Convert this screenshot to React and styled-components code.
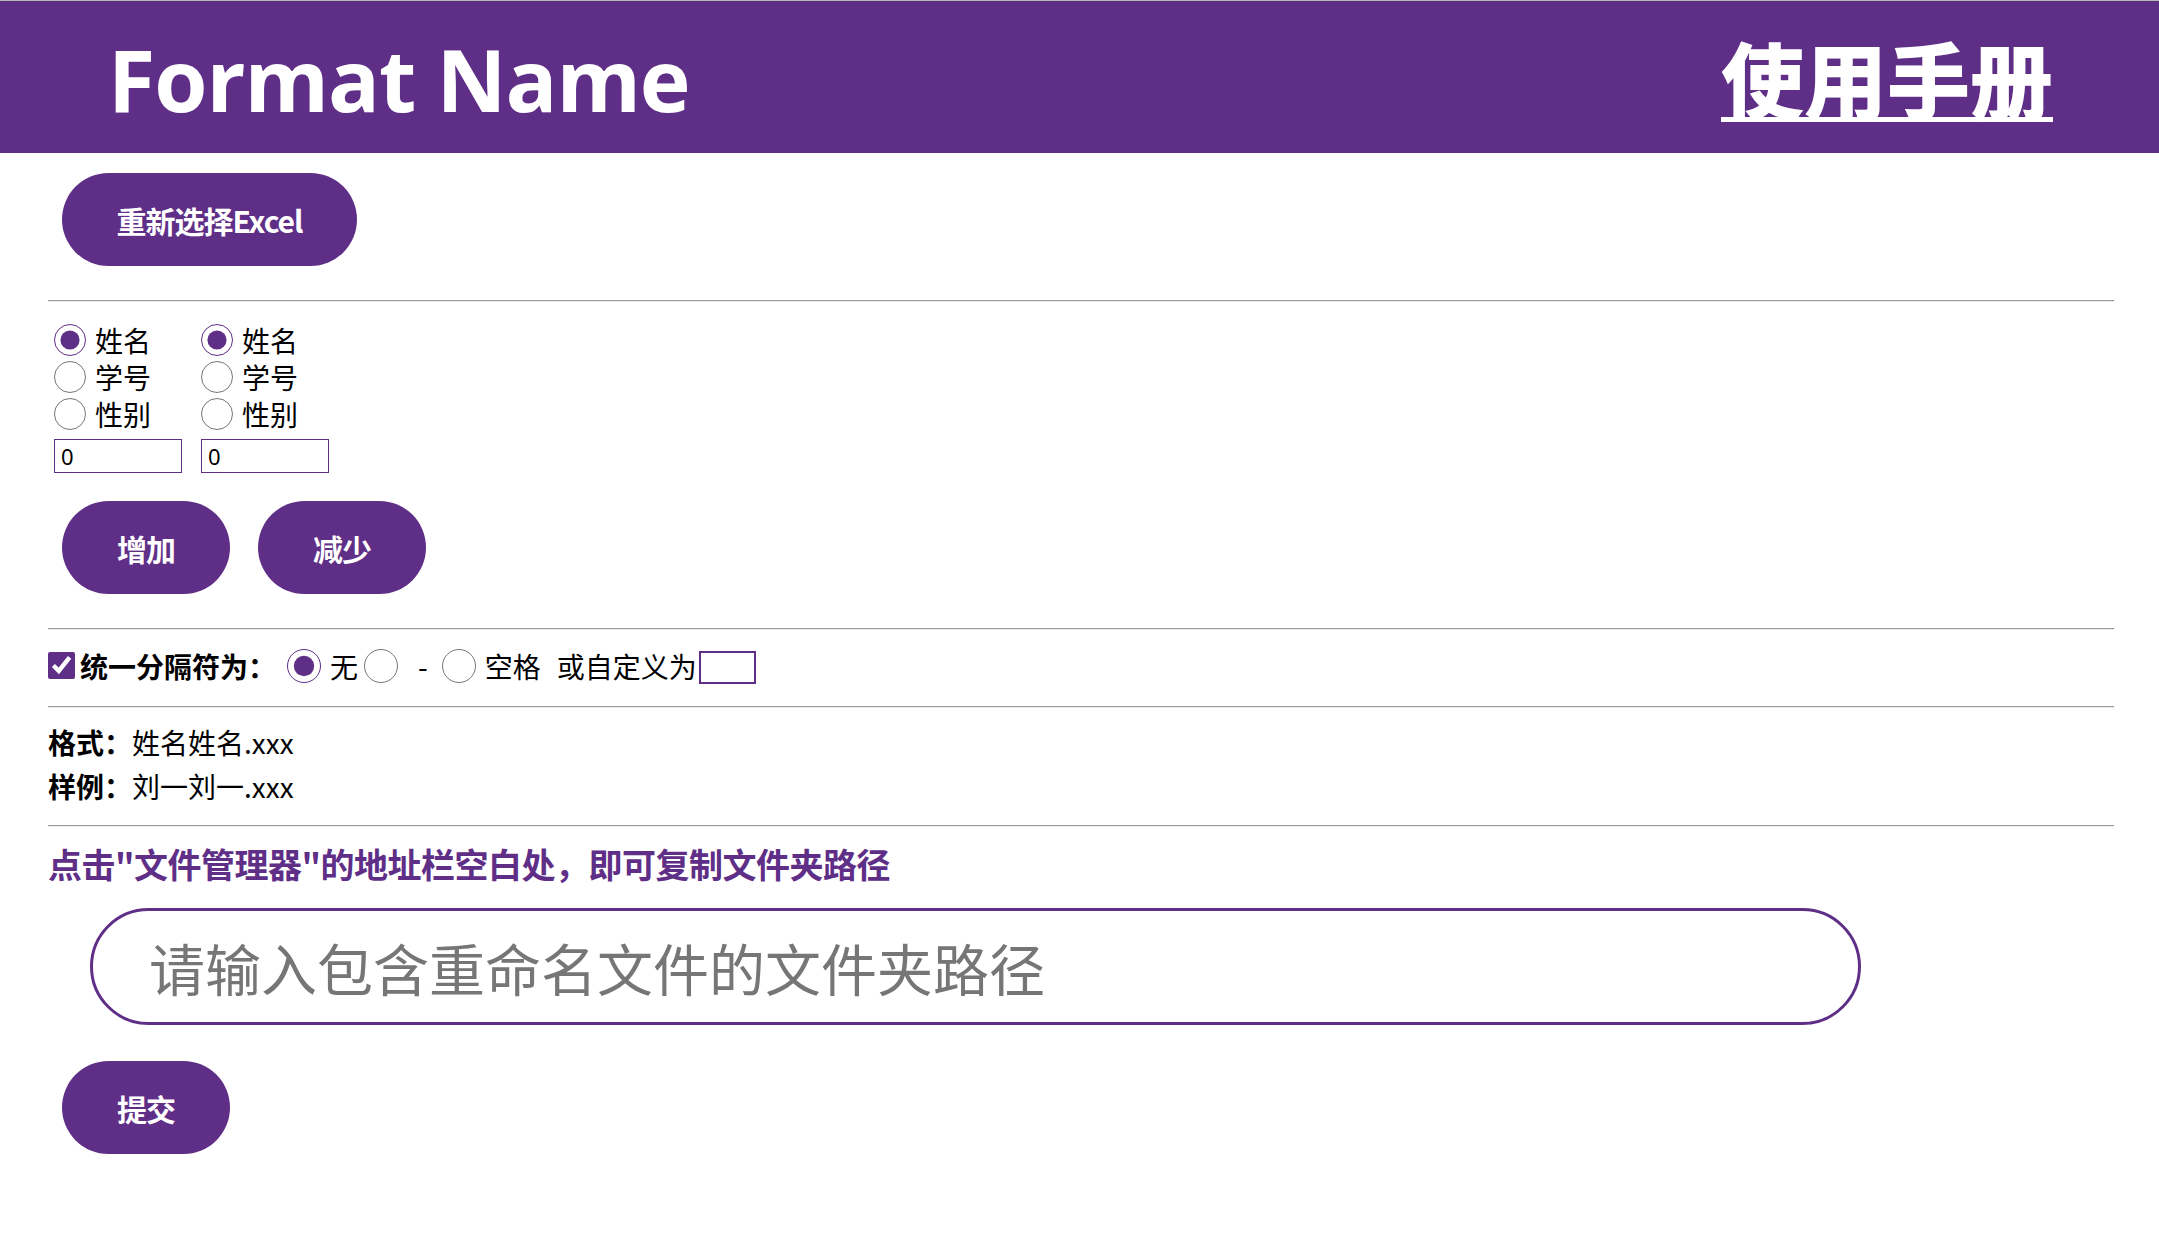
import React, { useState } from "react";
import styled, { createGlobalStyle } from "styled-components";

const purple = "#5f2f88";

const GlobalStyle = createGlobalStyle`
  body {
    margin: 0;
    background: #fff;
    font-family: "Noto Sans", "Noto Sans CJK SC", sans-serif;
    color: #000;
  }
`;

const Header = styled.header`
  height: 152px;
  border-top: 1px solid #b8b8b8;
  background: ${purple};
  display: flex;
  align-items: center;
  justify-content: space-between;
  padding: 0 106px 0 108px;
`;

const Logo = styled.h1`
  margin: 0;
  color: #fff;
  font-family: "Open Sans", "Noto Sans CJK SC", sans-serif;
  font-weight: 700;
  font-size: 86px;
  letter-spacing: -1px;
  line-height: 1;
  margin-top: 4px;
`;

const Manual = styled.a`
  color: #fff;
  font-family: "Noto Sans CJK SC", sans-serif;
  font-weight: 900;
  font-size: 83px;
  line-height: 1;
  text-decoration: underline;
  text-decoration-thickness: 5px;
  text-underline-offset: 4px;
  cursor: pointer;
`;

const Main = styled.main`
  padding: 0 45px 0 48px;
`;

const PillButton = styled.button`
  display: block;
  width: ${(p) => p.$width || 168}px;
  height: 93px;
  margin: ${(p) => p.$margin || "0"};
  border: none;
  border-radius: 47px;
  background: ${purple};
  color: #fff;
  font-family: "Noto Sans CJK SC", sans-serif;
  font-weight: 700;
  font-size: 30px;
  letter-spacing: -1px;
  cursor: pointer;
`;

const Rule = styled.hr`
  margin: ${(p) => p.$margin || "0"};
  border: none;
  border-top: 1px solid #9a9a9a;
  border-bottom: 1px solid #ececec;
  height: 0;
`;

const Columns = styled.div`
  display: flex;
  gap: 13px;
  margin-top: 19px;
`;

const Column = styled.div`
  display: flex;
  flex-direction: column;
  width: 134px;
`;

const RadioLabel = styled.label`
  display: flex;
  align-items: center;
  height: 37px;
  font-family: "Noto Sans CJK SC", sans-serif;
  font-size: 28px;
  gap: ${(p) => p.$gap ?? 9}px;
  white-space: nowrap;
`;

const Radio = styled.input.attrs({ type: "radio" })`
  width: ${(p) => p.$size || 32}px;
  height: ${(p) => p.$size || 32}px;
  margin: 0 0 0 ${(p) => p.$ml ?? 6}px;
  accent-color: ${purple};
  flex-shrink: 0;
`;

const NumberBox = styled.input`
  box-sizing: border-box;
  width: 128px;
  height: 34px;
  margin: 7px 0 0 6px;
  border: 1px solid ${purple};
  padding: 0 6px;
  font-family: "Noto Sans", sans-serif;
  font-size: 22px;
  outline: none;
`;

const ButtonRow = styled.div`
  display: flex;
  gap: 28px;
  margin: 28px 0 0 14px;
`;

const SeparatorRow = styled.div`
  display: flex;
  align-items: center;
  box-sizing: border-box;
  height: 76px;
  padding-bottom: 5px;
  font-family: "Noto Sans CJK SC", sans-serif;
  font-size: 28px;
`;

const Check = styled.input.attrs({ type: "checkbox" })`
  width: 27px;
  height: 27px;
  margin: 0 5px 0 0;
  accent-color: ${purple};
`;

const Bold = styled.span`
  font-weight: 700;
  margin-right: 5px;
`;

const Plain = styled.span`
  margin: ${(p) => p.$margin || "0"};
`;

const CustomBox = styled.input`
  box-sizing: border-box;
  width: 57px;
  height: 33px;
  margin: 4px 0 0 2px;
  border: 2px solid ${purple};
  outline: none;
`;

const InfoBlock = styled.div`
  padding: 12px 0 17px;
`;

const InfoLine = styled.div`
  height: 44px;
  display: flex;
  align-items: center;
  font-family: "Noto Sans CJK SC", sans-serif;
  font-size: 28px;
  strong {
    font-weight: 700;
  }
`;

const Hint = styled.p`
  margin: 20px 0 0;
  color: ${purple};
  font-family: "Noto Sans CJK SC", sans-serif;
  font-weight: 700;
  font-size: 34px;
  letter-spacing: -0.5px;
  line-height: 34px;
`;

const PathInput = styled.input`
  display: block;
  box-sizing: border-box;
  width: 1771px;
  height: 117px;
  margin: 27px 0 0 42px;
  padding: 0 56px;
  border: 3px solid ${purple};
  border-radius: 59px;
  font-family: "Noto Sans CJK SC", sans-serif;
  font-size: 56px;
  outline: none;
  &::placeholder {
    color: #767676;
  }
`;

const fields = ["姓名", "学号", "性别"];

function FieldColumn({ name }) {
  const [value, setValue] = useState("姓名");
  return (
    <Column>
      {fields.map((f) => (
        <RadioLabel key={f}>
          <Radio
            name={name}
            checked={value === f}
            onChange={() => setValue(f)}
          />
          {f}
        </RadioLabel>
      ))}
      <NumberBox defaultValue="0" />
    </Column>
  );
}

export default function App() {
  const [sep, setSep] = useState("none");
  return (
    <>
      <GlobalStyle />
      <Header>
        <Logo>Format Name</Logo>
        <Manual>使用手册</Manual>
      </Header>
      <Main>
        <PillButton $width={295} $margin="20px 0 0 14px">
          重新选择Excel
        </PillButton>
        <Rule $margin="34px 0 0" />
        <Columns>
          <FieldColumn name="f1" />
          <FieldColumn name="f2" />
        </Columns>
        <ButtonRow>
          <PillButton>增加</PillButton>
          <PillButton>减少</PillButton>
        </ButtonRow>
        <Rule $margin="34px 0 0" />
        <SeparatorRow>
          <Check defaultChecked />
          <Bold>统一分隔符为：</Bold>
          <RadioLabel>
            <Radio
              $size={34}
              name="sep"
              checked={sep === "none"}
              onChange={() => setSep("none")}
            />
            无
          </RadioLabel>
          <RadioLabel $gap={20}>
            <Radio
              $size={34}
              name="sep"
              checked={sep === "dash"}
              onChange={() => setSep("dash")}
            />
            -
          </RadioLabel>
          <RadioLabel>
            <Radio
              $size={34}
              $ml={14}
              name="sep"
              checked={sep === "space"}
              onChange={() => setSep("space")}
            />
            空格
          </RadioLabel>
          <Plain $margin="0 0 0 16px">或自定义为</Plain>
          <CustomBox />
        </SeparatorRow>
        <Rule />
        <InfoBlock>
          <InfoLine>
            <strong>格式：</strong>姓名姓名.xxx
          </InfoLine>
          <InfoLine>
            <strong>样例：</strong>刘一刘一.xxx
          </InfoLine>
        </InfoBlock>
        <Rule />
        <Hint>点击"文件管理器"的地址栏空白处，即可复制文件夹路径</Hint>
        <PathInput placeholder="请输入包含重命名文件的文件夹路径" />
        <PillButton $margin="36px 0 0 14px">提交</PillButton>
      </Main>
    </>
  );
}
